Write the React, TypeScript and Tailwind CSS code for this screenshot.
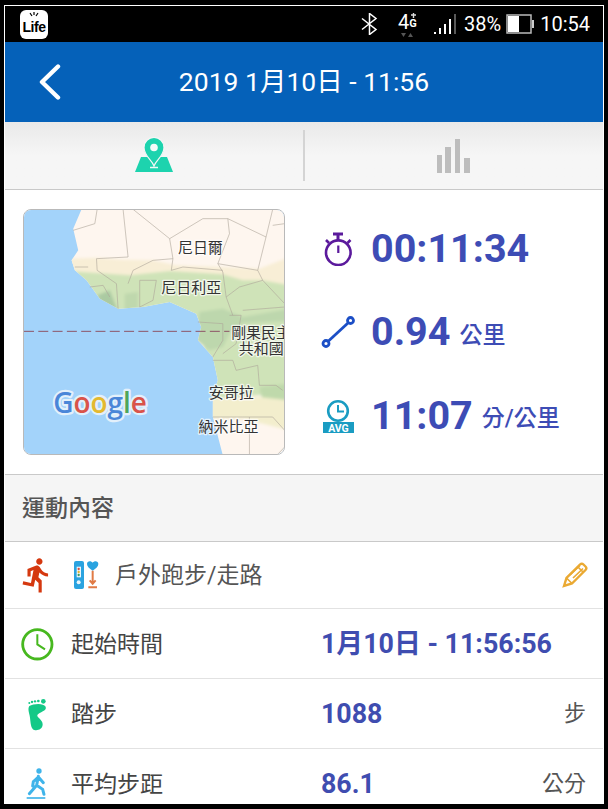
import { MdDirectionsRun } from "react-icons/md";

function StatusBar() {
  return (
    <div className="flex h-[36px] shrink-0 items-center bg-black pl-[15px] pr-[13px] text-white">
      <div className="relative flex h-[29px] w-[28px] items-end justify-center rounded-[6px] bg-white pb-[5px] text-[14px] font-bold leading-none tracking-[-0.5px] text-black font-['Liberation_Sans',sans-serif]">
        Life
        <svg className="absolute left-[9px] top-[2px]" width="10" height="6" viewBox="0 0 10 6">
          <path d="M5 0v3M1 1l2 3M9 1L7 4" stroke="#000" strokeWidth="1.200" />
        </svg>
      </div>
      <div className="ml-auto flex items-center">
        <svg className="mr-[20px]" width="18" height="22" viewBox="0 0 18 22" fill="none" stroke="#fff" strokeWidth="1.500">
          <path d="M2 5.500l14 11-6.500 5V0.500l6.500 5-14 11" />
        </svg>
        <div className="relative mr-[15px] flex h-[28px] w-[21px] items-start pt-[1px]">
          <span className="text-[20px] leading-[22px]">4</span>
          <span className="mt-[7px] text-[11px] font-bold leading-[12px]">G</span>
          <svg className="absolute left-0 top-0" width="21" height="28" viewBox="0 0 21 28">
            <path d="M13 5h5M15.500 3v5" stroke="#ddd" strokeWidth="1.400" />
            <path d="M3 23h5l-2.500 4zM10 27h5l-2.500-4z" fill="#555" />
          </svg>
        </div>
        <svg className="mr-[7px]" width="23" height="21" viewBox="0 0 23 21">
          <path d="M1 18v2M6 14v6M11 10v10M16 5v15" stroke="#fff" strokeWidth="2" />
          <path d="M21 0v20" stroke="#777" strokeWidth="1.500" />
        </svg>
        <span className="text-[20px] leading-none">38%</span>
        <svg className="ml-[5px]" width="28" height="20" viewBox="0 0 28 20">
          <rect x="1" y="1" width="24" height="18" fill="none" stroke="#bbb" strokeWidth="1.500" />
          <rect x="2" y="2" width="11" height="16" fill="#fff" />
          <rect x="26" y="6" width="2" height="8" fill="#ccc" />
        </svg>
        <span className="ml-[6px] text-[20px] leading-none">10:54</span>
      </div>
    </div>
  );
}

function Header() {
  return (
    <div className="grid h-[80px] shrink-0 grid-cols-[1fr_auto_1fr] items-center bg-[#0561b9] text-white">
      <svg className="ml-[33px]" width="24" height="36" viewBox="0 0 24 36">
        <path d="M20 2.500L4 18l16 15.500" fill="none" stroke="#fff" strokeWidth="4.400" strokeLinecap="round" strokeLinejoin="round" />
      </svg>
      <div className="text-[26.500px] leading-none">2019 1月10日 - 11:56</div>
      <div />
    </div>
  );
}

function Tabs() {
  return (
    <div className="flex h-[68px] shrink-0 border-b border-[#c9c9c9] bg-gradient-to-b from-[#e9e9e9] via-[#f6f6f6] to-[#f6f6f6]">
      <div className="flex flex-1 items-center justify-center pb-[1px]">
        <svg width="38" height="36" viewBox="0 0 38 36" className="ml-[-1px] mt-[-1px]">
          <path d="M6 20H32L38 35H0Z" fill="#1dd3ae" />
          <path d="M19 29c-2-6-10-10-10-18.500a10 10 0 0120 0C29 19 21 23 19 29z" fill="#1dd3ae" stroke="#f6f6f6" strokeWidth="1.200" />
          <circle cx="19" cy="10.500" r="3.800" fill="#f4fbf9" />
          <path d="M15 30.500h8" stroke="#eafaf6" strokeWidth="1.500" />
        </svg>
      </div>
      <div className="my-[8px] w-[2px] bg-[#d4d4d4]" />
      <div className="flex flex-1 items-center justify-center">
        <svg width="34" height="34" viewBox="0 0 34 34" fill="#bdbdbd">
          <rect x="0" y="16" width="5" height="18" />
          <rect x="8" y="8" width="6" height="26" />
          <rect x="18" y="0" width="5" height="34" />
          <rect x="27" y="19" width="6" height="15" />
        </svg>
      </div>
    </div>
  );
}

const LAND =
  "M215 27L190 85L205 150L185 180L195 210L230 240L270 295L325 325L400 320L480 305L560 340L575 380L565 420L610 470L625 540L610 590L610 650L640 765L830 765L830 27Z";

function MapCard() {
  const borders = [
    "262,27 255,70 190,90",
    "340,27 355,170 260,175 262,210 320,250 325,325",
    "370,27 480,115 580,55 655,55 770,110 790,27",
    "790,75 826,70",
    "480,115 490,175 430,180 370,210 355,250",
    "655,55 660,100 625,190 640,215 650,290 670,345",
    "625,190 745,210 770,110",
    "490,175 485,210 520,200 640,210",
    "745,210 760,240 690,260 650,290",
    "760,240 826,310",
    "700,330 826,320",
    "390,240 440,240 430,300 390,320 390,240",
    "195,200 235,200",
    "240,260 280,255 300,290",
    "565,365 640,370 640,420 610,470",
    "660,345 695,345 680,430 640,460",
    "610,480 670,480 680,510 745,495 750,555 800,555 820,570",
    "610,650 700,650 790,650 826,690",
    "720,650 720,765",
    "826,740 805,762",
  ];
  const labels: [string, number, number][] = [
    ["尼日爾", 505, 158],
    ["尼日利亞", 455, 278],
    ["剛果民主", 665, 412],
    ["共和國", 688, 462],
    ["安哥拉", 598, 593],
    ["納米比亞", 567, 695],
  ];
  return (
    <div className="h-[246px] w-[262px] shrink-0 overflow-hidden rounded-[8px] border border-[#b9b9b9]">
      <svg width="260" height="244" viewBox="42 29 782 732" preserveAspectRatio="none" className="block">
        <defs>
          <clipPath id="land">
            <path d={LAND} />
          </clipPath>
          <filter id="soft" x="-10%" y="-10%" width="120%" height="120%">
            <feGaussianBlur stdDeviation="4" />
          </filter>
        </defs>
        <rect x="0" y="0" width="900" height="800" fill="#a3d3fa" />
        <path d={LAND} fill="#fef6ef" />
        <g clipPath="url(#land)">
          <g filter="url(#soft)">
            <path d="M170 175L260 172L340 178L430 180L500 195L640 200L750 205L840 170L840 300L650 300L170 240Z" fill="#f8eed6" />
            <path d="M170 212L360 225L480 212L640 222L700 240L760 240L840 255L840 575L750 585L600 595L580 420L540 340L480 340L170 340Z" fill="#cfe3b8" />
            <path d="M570 335L640 325L700 350L840 325L840 362L700 368L660 400L640 440L600 450L560 420Z" fill="#bdd7ad" />
            <path d="M262 285L300 270L325 335L280 320Z" fill="#abcaa2" />
            <path d="M345 280L385 275L385 330L345 330Z" fill="#bfd8ad" />
            <path d="M750 560L840 550L840 610L765 625Z" fill="#bfd9ab" />
            <path d="M600 595L750 590L840 600L840 690L700 655L600 655Z" fill="#f3eecd" />
          </g>
        </g>
        {borders.map((p) => (
          <polyline key={p} points={p} fill="none" stroke="#aca599" strokeWidth="1.800" />
        ))}
        <path d="M42 393H660" stroke="#8d5266" strokeWidth="3" strokeDasharray="30 13" />
        {labels.map(([t, x, y]) => (
          <text key={t} x={x} y={y} fontSize="45" fill="#333" stroke="#ffffffb0" strokeWidth="8" paintOrder="stroke" strokeLinejoin="round">
            {t}
          </text>
        ))}
        <text x="130" y="637" fontSize="84" fontWeight="600" stroke="#e3f0fb" strokeWidth="13" paintOrder="stroke" strokeLinejoin="round" className="font-['Open_Sans',sans-serif]">
          <tspan fill="#4a86d8">G</tspan>
          <tspan fill="#d9534a">o</tspan>
          <tspan fill="#e4b92f">o</tspan>
          <tspan fill="#4a86d8">g</tspan>
          <tspan fill="#4fa65a">l</tspan>
          <tspan fill="#d9534a">e</tspan>
        </text>
      </svg>
    </div>
  );
}

function Stat({ icon, value, unit }: { icon: React.ReactNode; value: string; unit?: string }) {
  return (
    <div className="flex h-[48px] items-center">
      <div className="w-[34px] shrink-0">{icon}</div>
      <span className="ml-[16px] text-[39.500px] font-bold leading-none text-[#3d4cb5]">{value}</span>
      {unit && <span className="ml-[9px] mt-[6px] text-[23px] font-medium leading-none text-[#3d4cb5]">{unit}</span>}
    </div>
  );
}

function Summary() {
  return (
    <div className="flex h-[284px] shrink-0 items-center bg-white pl-[18px]">
      <MapCard />
      <div className="ml-[36px] flex flex-col gap-[35.500px]">
        <Stat
          value="00:11:34"
          icon={
            <svg width="34" height="34" viewBox="0 0 34 34" className="block" fill="none" stroke="#5b1a9c">
              <circle cx="17.300" cy="20.700" r="12.300" strokeWidth="2.600" />
              <path d="M12 2h10M17 2v6" strokeWidth="3" />
              <path d="M5 8l3 3M29.500 8l-3 3" strokeWidth="2.600" />
              <path d="M17.300 13.500v7.500" strokeWidth="2.200" />
            </svg>
          }
        />
        <Stat
          value="0.94"
          unit="公里"
          icon={
            <svg width="34" height="34" viewBox="0 0 34 34" className="block" fill="none" stroke="#1c4fc6" strokeWidth="2.800">
              <circle cx="5" cy="28.500" r="3" />
              <circle cx="29.500" cy="5.500" r="3" />
              <path d="M7.500 26L27 8" />
            </svg>
          }
        />
        <Stat
          value="11:07"
          unit="分/公里"
          icon={
            <svg width="34" height="34" viewBox="0 0 34 34" className="block">
              <circle cx="17" cy="12" r="9.800" fill="none" stroke="#1a9cc2" strokeWidth="2.600" />
              <path d="M17 6v6.500h6" fill="none" stroke="#1a9cc2" strokeWidth="2" />
              <rect x="2" y="23" width="31" height="11" fill="#1a9cc2" />
              <text x="17.500" y="32.500" fontSize="10.500" fontWeight="700" fill="#fff" textAnchor="middle">AVG</text>
            </svg>
          }
        />
      </div>
    </div>
  );
}

function Row({ icon, label, value, unit }: { icon: React.ReactNode; label: string; value: string; unit?: string }) {
  return (
    <div className="flex h-[70px] shrink-0 items-center border-b border-[#e2e2e2] pl-[14px] pr-[17px]">
      <div className="w-[36px] shrink-0">{icon}</div>
      <span className="ml-[16px] mt-[2px] w-[250px] shrink-0 text-[23px] leading-none text-[#444]">{label}</span>
      <span className="mt-[2px] text-[26.800px] font-bold leading-none text-[#3f4db0]">{value}</span>
      {unit && <span className="ml-auto text-[22px] leading-none text-[#555]">{unit}</span>}
    </div>
  );
}

export default function App() {
  return (
    <div className="h-[809px] w-[608px] overflow-hidden bg-black pb-[5px] pl-[4px] pr-[4px] pt-[5px] font-[Roboto,'Noto_Sans_CJK_TC',sans-serif]" lang="zh-TW">
      <div className="flex h-full flex-col overflow-hidden border border-b-0 border-white bg-white">
        <StatusBar />
        <Header />
        <Tabs />
        <Summary />
        <div className="flex h-[68px] shrink-0 items-center border-y border-[#c9c9c9] bg-[#f5f5f5] pl-[17px] text-[23px] font-medium leading-none text-[#555]">
          運動內容
        </div>
        <div className="flex h-[67px] shrink-0 items-center border-b border-[#e2e2e2] pl-[13px] pr-[15px]">
          <MdDirectionsRun size={38} color="#d5380f" className="shrink-0" />
          <svg className="ml-[17px] shrink-0" width="27" height="30" viewBox="175 30 81 90">
            <rect x="178" y="33" width="30" height="84" rx="6" fill="#2aa3e0" />
            <rect x="186" y="50" width="13" height="32" fill="#eaf6fc" />
            <circle cx="192" cy="57" r="3.500" fill="#d94b3a" />
            <circle cx="192" cy="66" r="3.500" fill="#e8b52d" />
            <circle cx="192" cy="75" r="3.500" fill="#3f9b5e" />
            <circle cx="192" cy="97" r="6" fill="#eaf6fc" />
            <path d="M234 62c-10-7-17-12-17-20 0-10 12-11 17-4 5-7 17-6 17 4 0 8-7 13-17 20z" fill="#2aa3e0" />
            <path d="M234 62v38M225 91l9 10 9-10M221 112h26" fill="none" stroke="#e07a45" strokeWidth="6" />
          </svg>
          <span className="ml-[15px] text-[23px] leading-none text-[#555]">戶外跑步/走路</span>
          <svg className="ml-auto" width="26" height="26" viewBox="0 0 26 26" fill="none" stroke="#eaa932" strokeWidth="2.400">
            <path d="M2 24l2.500-8L18 2.500a2.500 2.500 0 013.500 0l2 2a2.500 2.500 0 010 3.500L10 21.500z" />
            <path d="M16 5l5 5M4.500 16l5.500 5.500M8 13L18 3.500M11 16L21 6.500" strokeWidth="1.700" />
          </svg>
        </div>
        <Row
          label="起始時間"
          value="1月10日 - 11:56:56"
          icon={
            <svg width="36" height="36" viewBox="57 255 108 108" className="block" fill="none" stroke="#47b81f">
              <circle cx="112" cy="310" r="44" strokeWidth="8.500" />
              <path d="M112 280v30l23 15" strokeWidth="6" />
            </svg>
          }
        />
        <Row
          label="踏步"
          value="1088"
          unit="步"
          icon={
            <svg width="36" height="36" viewBox="57 465 108 108" className="block" fill="#14c987">
              <path d="M88 495C100 488 130 485 137 497C142 510 118 512 112 522C110 530 128 535 128 550C128 565 112 570 103 567C92 563 92 545 90 530C88 515 82 505 88 495Z" />
              <circle cx="88" cy="486" r="3" />
              <circle cx="96" cy="483" r="3.500" />
              <circle cx="105" cy="481" r="3.500" />
              <circle cx="115" cy="480" r="4" />
              <circle cx="130" cy="481" r="7" />
            </svg>
          }
        />
        <Row
          label="平均步距"
          value="86.1"
          unit="公分"
          icon={
            <svg width="36" height="36" viewBox="57 675 108 108" className="block" fill="none" stroke="#3fb4ea" strokeLinecap="round">
              <circle cx="117" cy="690" r="8" fill="#3fb4ea" stroke="none" />
              <path d="M115 706L110 733L88 758M110 733L128 745L132 760M115 708L100 722L98 735M115 708L130 725" strokeWidth="9" />
              <path d="M80 771H136" strokeWidth="5" strokeLinecap="butt" />
            </svg>
          }
        />
      </div>
    </div>
  );
}
